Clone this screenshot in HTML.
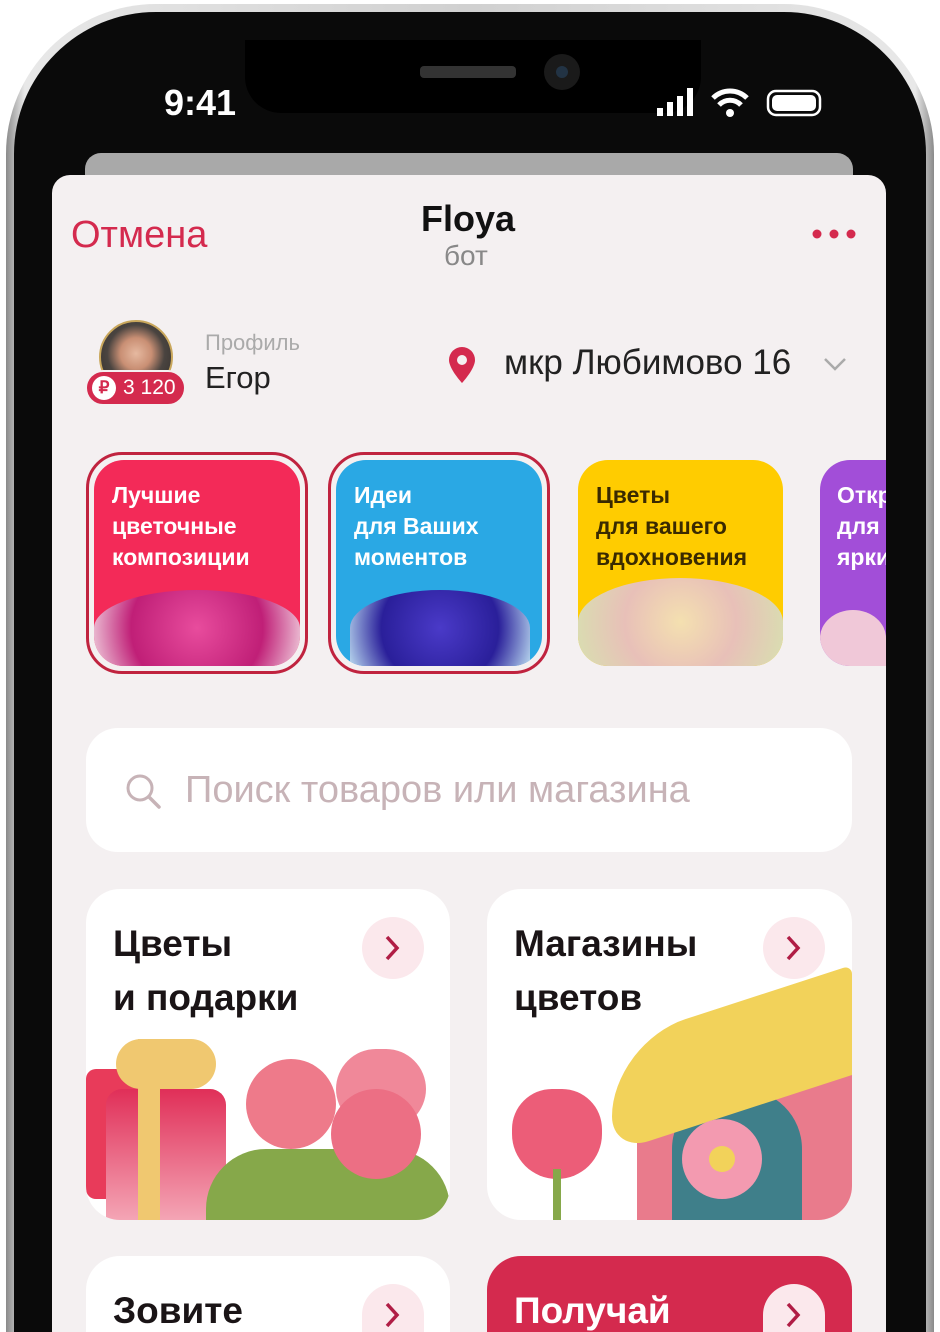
<!DOCTYPE html>
<html><head><meta charset="utf-8"><style>
*{margin:0;padding:0;box-sizing:border-box}
html,body{width:940px;height:1332px;overflow:hidden;background:#fff}
body{font-family:"Liberation Sans",sans-serif}
#w{position:relative;width:940px;height:1332px;overflow:hidden}
.abs{position:absolute}
.frame{left:6px;top:4px;width:928px;height:1328px;border-radius:150px 150px 0 0;background:linear-gradient(90deg,#8a8a8a,#e8e8e8 2%,#d0d0d0 50%,#e8e8e8 98%,#8a8a8a)}
.body{left:14px;top:12px;width:912px;height:1320px;border-radius:142px 142px 0 0;background:#0a0a0a}
.screen{left:52px;top:175px;width:834px;height:1157px;background:#f4f0f1;border-radius:18px 18px 0 0}
.sheet{left:85px;top:153px;width:768px;height:40px;background:#a9a9a9;border-radius:16px}
.notch{left:245px;top:40px;width:456px;height:73px;background:#000;border-radius:0 0 36px 36px}
.t{white-space:nowrap}
.story{border-radius:30px;overflow:hidden;color:#fff;font-weight:bold;font-size:23px;line-height:31px;padding:20px 0 0 18px}
.card{background:#fff;border-radius:34px;overflow:hidden}
.bc{border-radius:34px 34px 0 0}
.arr{width:62px;height:62px;border-radius:31px;background:#fbe8ec}
.ct{font-size:37px;font-weight:bold;color:#1a1416;line-height:54px}
</style></head><body><div id="w">
<div class="abs frame"></div>
<div class="abs body"></div>
<div class="abs notch"></div>
<div class="abs" style="left:420px;top:66px;width:96px;height:12px;background:#333;border-radius:4px"></div>
<div class="abs" style="left:544px;top:54px;width:36px;height:36px;background:#1a1a1a;border-radius:18px"></div>
<div class="abs" style="left:556px;top:66px;width:12px;height:12px;background:#234;border-radius:6px"></div>
<div class="abs t" style="left:164px;top:82px;color:#fff;font-size:36px;font-weight:bold">9:41</div>
<svg class="abs" style="left:655px;top:86px" width="170" height="32">
<rect x="2" y="22" width="6" height="8" fill="#fff"/><rect x="12" y="16" width="6" height="14" fill="#fff"/><rect x="22" y="10" width="6" height="20" fill="#fff"/><rect x="32" y="2" width="6" height="28" fill="#fff"/>
<path d="M58 12 a24 24 0 0 1 34 0" stroke="#fff" stroke-width="5" fill="none"/><path d="M64 19 a15 15 0 0 1 22 0" stroke="#fff" stroke-width="5" fill="none"/><circle cx="75" cy="27" r="4" fill="#fff"/>
<rect x="113" y="5" width="52" height="24" rx="8" fill="none" stroke="#fff" stroke-width="2.5"/><rect x="117" y="9" width="44" height="16" rx="5" fill="#fff"/>
</svg>
<div class="abs sheet"></div>
<div class="abs screen"></div>
<div class="abs t" style="left:71px;top:214px;color:#d42a4e;font-size:38px">Отмена</div>
<div class="abs t" style="left:421px;top:198px;color:#111;font-size:36px;font-weight:bold">Floya</div>
<div class="abs t" style="left:444px;top:240px;color:#888;font-size:28px">бот</div>
<svg class="abs" style="left:810px;top:226px" width="46" height="16"><circle cx="7" cy="8" r="4.5" fill="#d42a4e"/><circle cx="24" cy="8" r="4.5" fill="#d42a4e"/><circle cx="41" cy="8" r="4.5" fill="#d42a4e"/></svg>
<div class="abs" style="left:99px;top:320px;width:74px;height:74px;border-radius:37px;background:radial-gradient(circle at 50% 45%,#e6b9a0 0,#c98f74 30%,#4a4440 55%,#2e2a26 100%);border:2px solid #c9a75c"></div>
<div class="abs t" style="left:85px;top:370px;width:101px;height:36px;border-radius:18px;background:#d42a4e;border:2px solid #f4f0f1;color:#fff;font-size:21px;padding:4px 0 0 36px">3 120</div>
<div class="abs t" style="left:92px;top:376px;width:24px;height:24px;border-radius:12px;background:#fff;color:#d42a4e;font-size:17px;font-weight:bold;text-align:center;line-height:24px">₽</div>
<div class="abs t" style="left:205px;top:330px;color:#aaa;font-size:22px">Профиль</div>
<div class="abs t" style="left:205px;top:360px;color:#222;font-size:31px">Егор</div>
<svg class="abs" style="left:446px;top:345px" width="32" height="40"><path d="M16 2a13 13 0 0 1 13 13c0 9-13 23-13 23S3 24 3 15A13 13 0 0 1 16 2z" fill="#d42a4e"/><circle cx="16" cy="15" r="5" fill="#f4f0f1"/></svg>
<div class="abs t" style="left:504px;top:343px;color:#222;font-size:35px">мкр Любимово 16</div>
<svg class="abs" style="left:822px;top:356px" width="26" height="16"><path d="M3 3l10 10 10-10" stroke="#aaa" stroke-width="2.5" fill="none"/></svg>

<div class="abs" style="left:86px;top:452px;width:222px;height:222px;border-radius:36px;border:3px solid #c0233f"></div>
<div class="abs story" style="left:94px;top:460px;width:206px;height:206px;background:#f32a58">Лучшие<br>цветочные<br>композиции
<div class="abs" style="left:0;top:130px;width:206px;height:76px;border-radius:50% 50% 0 0;background:radial-gradient(circle,#e84c9d 0,#c01f77 60%,#f0d0de 100%)"></div></div>
<div class="abs" style="left:328px;top:452px;width:222px;height:222px;border-radius:36px;border:3px solid #c0233f"></div>
<div class="abs story" style="left:336px;top:460px;width:206px;height:206px;background:#2aa8e4">Идеи<br>для Ваших<br>моментов
<div class="abs" style="left:14px;top:130px;width:180px;height:76px;border-radius:50% 50% 0 0;background:radial-gradient(circle,#4a3ac8 0,#2a1f9a 60%,#b8d8ef 100%)"></div></div>
<div class="abs story" style="left:578px;top:460px;width:205px;height:206px;background:#ffcc00;color:#3a2a00;padding-left:18px">Цветы<br>для вашего<br>вдохновения
<div class="abs" style="left:0;top:118px;width:205px;height:88px;border-radius:50% 50% 0 0;background:radial-gradient(circle,#f4e0b0 0,#e8c0b8 50%,#d8e0b0 100%)"></div></div>
<div class="abs story" style="left:820px;top:460px;width:66px;height:206px;background:#a24ed8;padding-left:17px;border-radius:30px 0 0 30px">Откр<br>для<br>ярки
<div class="abs" style="left:0;top:150px;width:66px;height:56px;border-radius:50% 50% 0 0;background:#f0c8d8"></div></div>

<div class="abs" style="left:86px;top:728px;width:766px;height:124px;background:#fff;border-radius:32px"></div>
<svg class="abs" style="left:124px;top:772px" width="40" height="40"><circle cx="16" cy="16" r="12" stroke="#c7b3b7" stroke-width="3" fill="none"/><path d="M25 25l10 10" stroke="#c7b3b7" stroke-width="3.5" stroke-linecap="round"/></svg>
<div class="abs t" style="left:185px;top:769px;color:#c7b3b7;font-size:38px">Поиск товаров или магазина</div>

<div class="abs card" style="left:86px;top:889px;width:364px;height:331px">
<div class="abs ct t" style="left:27px;top:28px">Цветы<br>и подарки</div>
<div class="abs arr" style="left:276px;top:28px"></div>
<svg class="abs" style="left:296px;top:45px" width="20" height="28"><path d="M5 3l10 11-10 11" stroke="#b01d45" stroke-width="3.5" fill="none"/></svg>
<div class="abs" style="left:0;top:180px;width:80px;height:130px;background:#e83b5a;border-radius:10px"></div>
<div class="abs" style="left:20px;top:200px;width:120px;height:131px;background:linear-gradient(#e02f58,#f4a5b5);border-radius:16px 16px 0 0"></div>
<div class="abs" style="left:52px;top:150px;width:22px;height:181px;background:#f0c870"></div>
<div class="abs" style="left:30px;top:150px;width:100px;height:50px;border-radius:40px;background:#f0c870"></div>
<div class="abs" style="left:120px;top:260px;width:244px;height:71px;border-radius:60px 60px 0 0;background:#86a84a"></div>
<div class="abs" style="left:160px;top:170px;width:90px;height:90px;border-radius:45px;background:#ee7a8a"></div>
<div class="abs" style="left:250px;top:160px;width:90px;height:80px;border-radius:40px;background:#f08899"></div>
<div class="abs" style="left:245px;top:200px;width:90px;height:90px;border-radius:45px;background:#ec6f84"></div>
</div>
<div class="abs card" style="left:487px;top:889px;width:365px;height:331px">
<div class="abs ct t" style="left:27px;top:28px">Магазины<br>цветов</div>
<div class="abs" style="left:150px;top:180px;width:215px;height:151px;background:#e97b8c"></div>
<div class="abs" style="left:185px;top:200px;width:130px;height:131px;background:#3f7f8a;border-radius:60px 60px 0 0"></div>
<div class="abs" style="left:125px;top:115px;width:240px;height:110px;background:#f2d25a;border-radius:80px 10px 0 40px;transform:skewY(-18deg)"></div>
<div class="abs arr" style="left:276px;top:28px"></div>
<svg class="abs" style="left:296px;top:45px" width="20" height="28"><path d="M5 3l10 11-10 11" stroke="#b01d45" stroke-width="3.5" fill="none"/></svg>
<div class="abs" style="left:195px;top:230px;width:80px;height:80px;border-radius:40px;background:#f39ab0"></div>
<div class="abs" style="left:222px;top:257px;width:26px;height:26px;border-radius:13px;background:#f2d25a"></div>
<div class="abs" style="left:25px;top:200px;width:90px;height:90px;border-radius:40px 40px 45px 45px;background:#ec5d78"></div>
<div class="abs" style="left:66px;top:280px;width:8px;height:51px;background:#86a84a"></div>
</div>

<div class="abs card bc" style="left:86px;top:1256px;width:364px;height:76px">
<div class="abs ct t" style="left:27px;top:28px">Зовите</div>
<div class="abs arr" style="left:276px;top:28px;height:48px;border-radius:31px 31px 0 0"></div>
<svg class="abs" style="left:296px;top:45px" width="20" height="28"><path d="M5 3l10 11-10 11" stroke="#b01d45" stroke-width="3.5" fill="none"/></svg>
</div>
<div class="abs card bc" style="left:487px;top:1256px;width:365px;height:76px;background:#d42a4e">
<div class="abs ct t" style="left:27px;top:28px;color:#fff">Получай</div>
<div class="abs arr" style="left:276px;top:28px;height:48px;border-radius:31px 31px 0 0"></div>
<svg class="abs" style="left:296px;top:45px" width="20" height="28"><path d="M5 3l10 11-10 11" stroke="#b01d45" stroke-width="3.5" fill="none"/></svg>
</div>
</div></body></html>
